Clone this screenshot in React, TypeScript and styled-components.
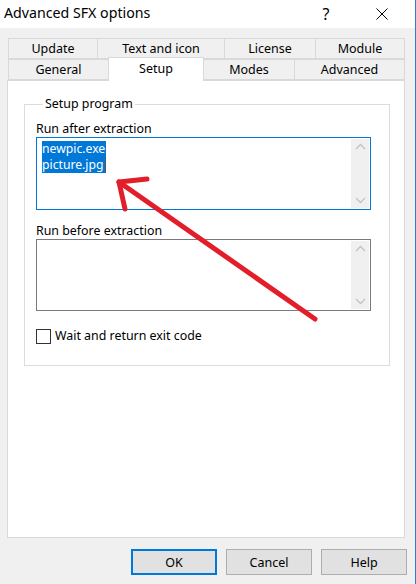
import React from "react";
import styled, { createGlobalStyle } from "styled-components";

const GlobalStyle = createGlobalStyle`
  html, body { margin: 0; padding: 0; background: #f0f0f0; }
  body { font-family: "Noto Sans", "DejaVu Sans", sans-serif; color: #000; }
  * { box-sizing: border-box; }
`;

const Window = styled.div`
  position: relative;
  width: 416px;
  height: 584px;
  background: #f0f0f0;
  border-right: 1px solid #2a7fcf;
  display: flex;
  flex-direction: column;
  overflow: hidden;
`;

const TitleBar = styled.div`
  height: 28px;
  background: #fff;
  display: flex;
  align-items: center;
  padding-left: 4px;
`;

const Title = styled.div`
  flex: 1;
  font-size: 14.2px;
  line-height: 20px;
  margin-top: -2px;
`;

const TitleButton = styled.div<{ $w: number }>`
  width: ${(p) => p.$w}px;
  height: 28px;
  display: flex;
  align-items: center;
  justify-content: center;
  font-size: 16px;
  color: #000;
`;

const Body = styled.div`
  flex: 1;
  display: flex;
  flex-direction: column;
  padding: 10px 0 0 7px;
`;

const TabRow = styled.div`
  display: flex;
  align-items: flex-end;
  height: 21px;
  padding-left: 1px;
`;

const Tab = styled.div<{ $w: number; $active?: boolean }>`
  position: relative;
  width: ${(p) => p.$w}px;
  height: ${(p) => (p.$active ? 24 : 21)}px;
  margin-left: -1px;
  margin-bottom: ${(p) => (p.$active ? -1 : 0)}px;
  z-index: ${(p) => (p.$active ? 2 : 1)};
  background: ${(p) => (p.$active ? "#fff" : "#f0f0f0")};
  border: 1px solid #d9d9d9;
  border-bottom: ${(p) => (p.$active ? "none" : "1px solid #d9d9d9")};
  display: flex;
  align-items: ${(p) => (p.$active ? "flex-start" : "center")};
  padding-top: ${(p) => (p.$active ? 2 : 0)}px;
  justify-content: center;
  font-size: 12.5px;
  line-height: 17px;
  &:first-child { margin-left: 0; }
`;

const Panel = styled.div`
  position: relative;
  width: 398px;
  height: 458px;
  background: #fff;
  border: 1px solid #d9d9d9;
  padding: 14px 0 0 16px;
`;

const Group = styled.fieldset`
  margin: 0;
  width: 366px;
  border: 1px solid #dcdcdc;
  padding: 6px 18px 21px 11px;
  display: flex;
  flex-direction: column;
`;

const Legend = styled.legend`
  font-size: 12.4px;
  line-height: 18px;
  padding: 0 2px;
  margin-left: 7px;
`;

const FieldLabel = styled.div<{ $top?: number }>`
  font-size: 12.4px;
  line-height: 18px;
  padding-top: 1px;
  height: 18px;
  margin-top: ${(p) => p.$top ?? 0}px;
`;

const EditBox = styled.div<{ $focused?: boolean; $h: number }>`
  position: relative;
  height: ${(p) => p.$h}px;
  border: 1px solid ${(p) => (p.$focused ? "#0078d7" : "#7a7a7a")};
  background: #fff;
  display: flex;
`;

const EditText = styled.div`
  flex: 1;
  padding: 3px 0 0 5px;
  font-size: 12.2px;
  display: flex;
  flex-direction: column;
  align-items: flex-start;
`;

const Line = styled.div`
  display: flex;
  align-items: stretch;
  height: 16px;
  line-height: 16px;
`;

const Selected = styled.span`
  display: block;
  background: #0078d7;
  color: #fff;
  padding: 0 1px 0 0;
`;

const Caret = styled.span`
  display: block;
  width: 1px;
  background: #555;
`;

const ScrollBar = styled.div`
  width: 18px;
  margin: 1px 1px 1px 0;
  background: #f0f0f0;
  display: flex;
  flex-direction: column;
  justify-content: space-between;
  align-items: center;
  padding: 4px 0;
`;

const CheckRow = styled.div`
  display: flex;
  align-items: center;
  margin-top: 17px;
  gap: 4px;
`;

const CheckBox = styled.div`
  width: 15px;
  height: 15px;
  border: 1px solid #333;
  background: #fff;
`;

const CheckLabel = styled.div`
  font-size: 12.4px;
  line-height: 16px;
`;

const Footer = styled.div`
  display: flex;
  justify-content: flex-end;
  gap: 9px;
  padding: 11px 8px 0 0;
`;

const Button = styled.div<{ $default?: boolean }>`
  width: 86px;
  height: 26px;
  background: #e1e1e1;
  border: ${(p) => (p.$default ? "2px solid #0078d7" : "1px solid #adadad")};
  display: flex;
  align-items: center;
  justify-content: center;
  font-size: 12.5px;
`;

const ArrowLayer = styled.svg`
  position: absolute;
  left: 0;
  top: 0;
  pointer-events: none;
`;

const Chevron = ({ up }: { up?: boolean }) => (
  <svg width="11" height="7" viewBox="0 0 11 7">
    <path
      d={up ? "M1 6 L5.5 1.5 L10 6" : "M1 1 L5.5 5.5 L10 1"}
      fill="none"
      stroke="#c2c2c2"
      strokeWidth="1.3"
    />
  </svg>
);

export default function App() {
  return (
    <>
      <GlobalStyle />
      <Window>
        <TitleBar>
          <Title>Advanced SFX options</Title>
          <TitleButton $w={46}>?</TitleButton>
          <TitleButton $w={66}>
            <svg width="12" height="12" viewBox="0 0 12 12">
              <path d="M0.5 0.5 L11.5 11.5 M11.5 0.5 L0.5 11.5" stroke="#000" strokeWidth="1" />
            </svg>
          </TitleButton>
        </TitleBar>
        <Body>
          <TabRow>
            <Tab $w={90}>Update</Tab>
            <Tab $w={128}>Text and icon</Tab>
            <Tab $w={92}>License</Tab>
            <Tab $w={90}>Module</Tab>
          </TabRow>
          <TabRow>
            <Tab $w={101}>General</Tab>
            <Tab $w={96} $active>Setup</Tab>
            <Tab $w={92}>Modes</Tab>
            <Tab $w={111}>Advanced</Tab>
          </TabRow>
          <Panel>
            <Group>
              <Legend>Setup program</Legend>
              <FieldLabel>Run after extraction</FieldLabel>
              <EditBox $focused $h={73}>
                <EditText>
                  <Line>
                    <Selected>newpic.exe</Selected>
                  </Line>
                  <Line>
                    <Selected>picture.jpg</Selected>
                    <Caret />
                  </Line>
                </EditText>
                <ScrollBar>
                  <Chevron up />
                  <Chevron />
                </ScrollBar>
              </EditBox>
              <FieldLabel $top={11}>Run before extraction</FieldLabel>
              <EditBox $h={72}>
                <EditText />
                <ScrollBar>
                  <Chevron up />
                  <Chevron />
                </ScrollBar>
              </EditBox>
              <CheckRow>
                <CheckBox />
                <CheckLabel>Wait and return exit code</CheckLabel>
              </CheckRow>
            </Group>
          </Panel>
          <Footer>
            <Button $default>OK</Button>
            <Button>Cancel</Button>
            <Button>Help</Button>
          </Footer>
        </Body>
        <ArrowLayer width="416" height="584" viewBox="0 0 416 584">
          <g fill="none" stroke="#e31e2b" strokeWidth="5" strokeLinecap="round" strokeLinejoin="round">
            <path d="M315 319 L119 182" />
            <path d="M147 179 L119 182 L125 209" />
          </g>
        </ArrowLayer>
      </Window>
    </>
  );
}
